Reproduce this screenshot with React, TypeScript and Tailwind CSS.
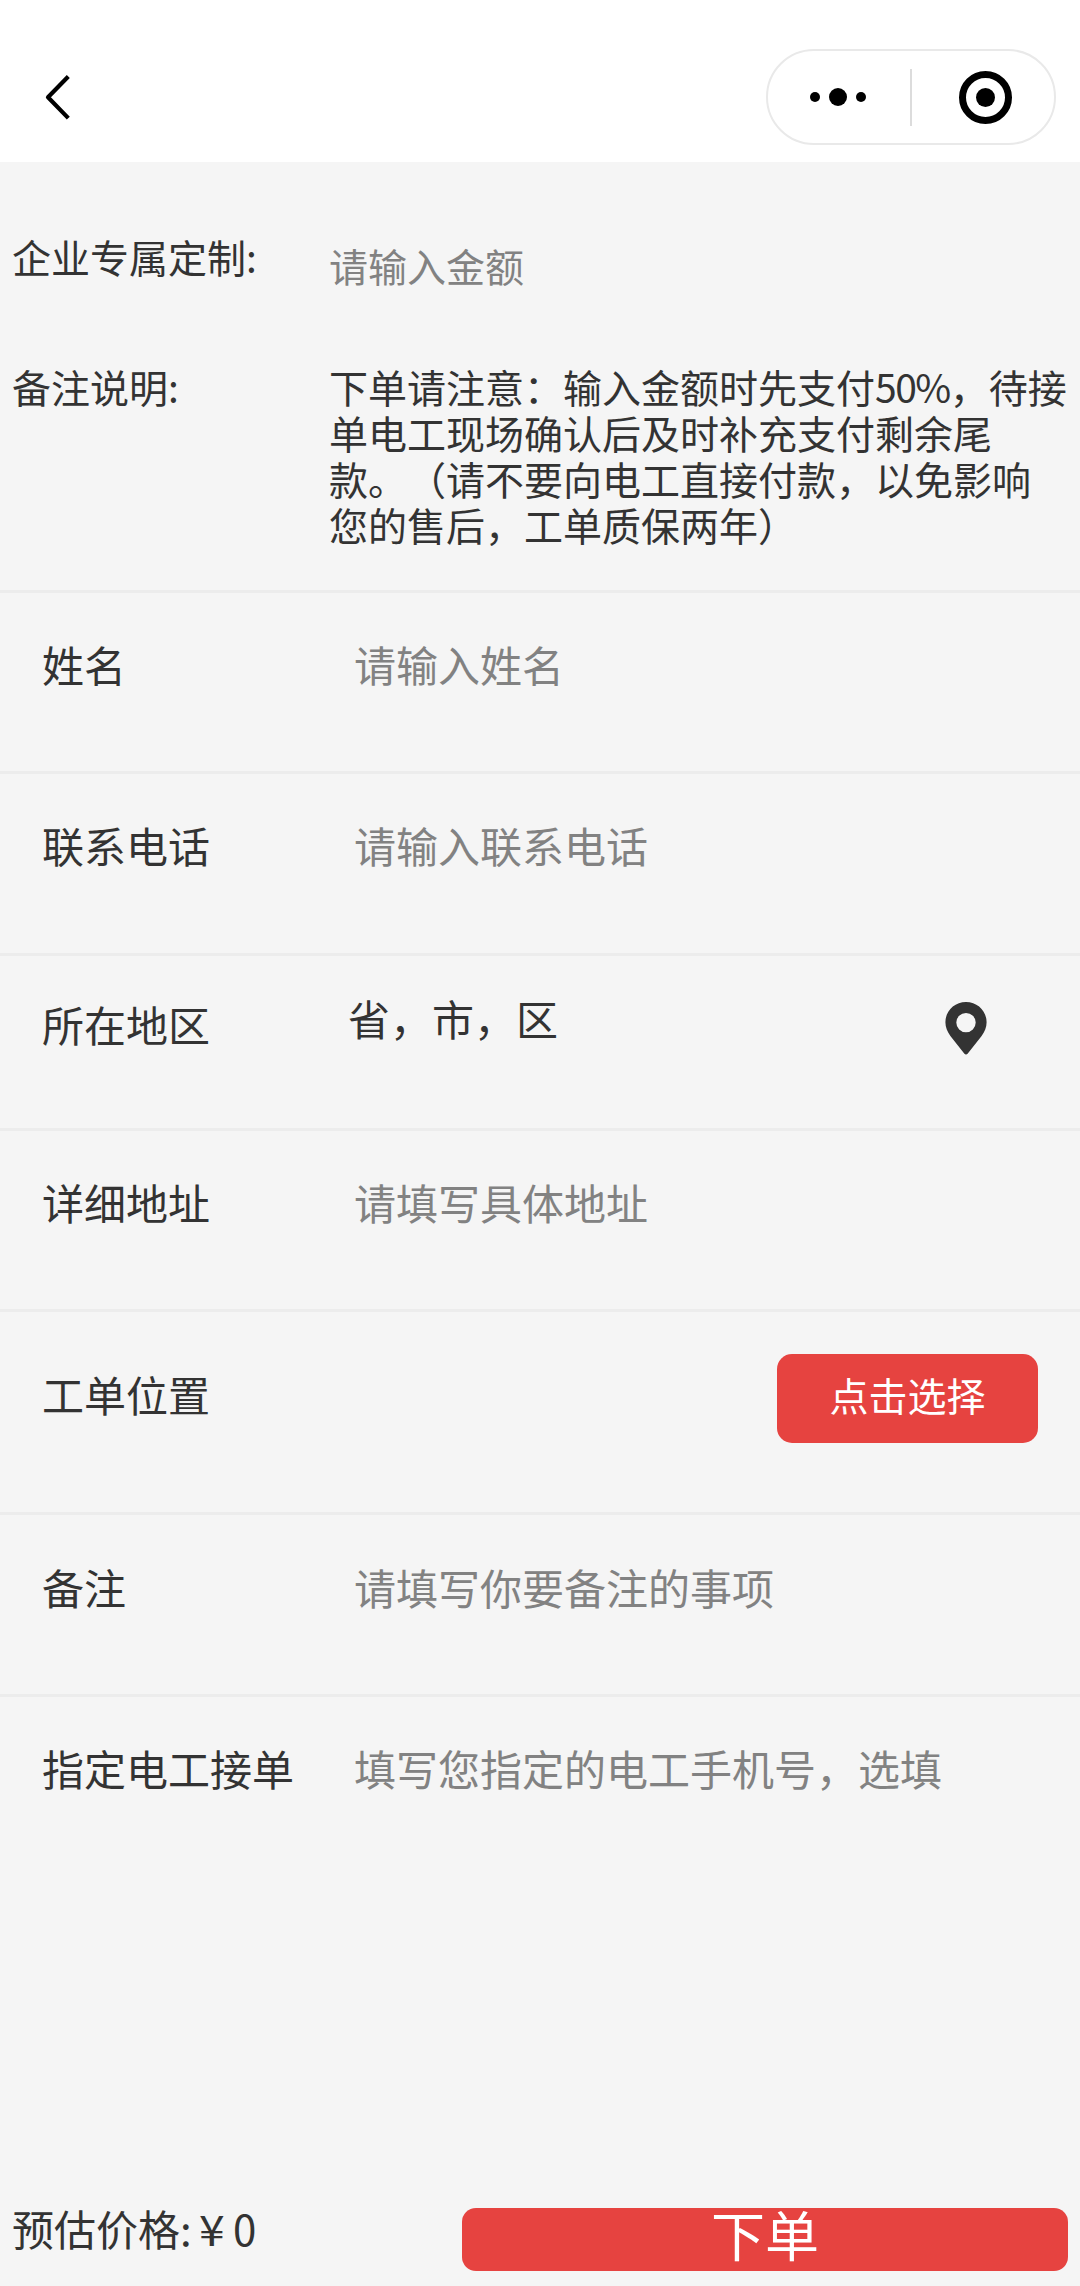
import type { ReactNode } from "react";

function Header() {
  return (
    <header className="flex h-[162px] items-start justify-between bg-white pl-[40px] pr-[24px] pt-[49px]">
      <button type="button" aria-label="返回" className="flex h-[96px] items-center">
        <svg width="36" height="52" viewBox="0 0 36 52" fill="none" className="block">
          <path d="M28.300 5.500 8 26.300 28.300 47.100" stroke="#000" strokeWidth="4.200" strokeLinejoin="round" />
        </svg>
      </button>
      <div className="flex h-[96px] w-[290px] items-center rounded-full border-2 border-[#e9e9e9]">
        <button type="button" aria-label="更多" className="flex w-[142px] items-center justify-center gap-[9px] pr-[2px]">
          <span className="size-[10px] rounded-full bg-black" />
          <span className="size-[18px] rounded-full bg-black" />
          <span className="size-[10px] rounded-full bg-black" />
        </button>
        <span className="h-[57px] w-[2px] bg-[#dcdcdc]" />
        <button type="button" aria-label="关闭" className="flex flex-1 items-center justify-center pl-[5px]">
          <span className="flex size-[53px] items-center justify-center rounded-full border-[7px] border-black">
            <span className="size-[19px] rounded-full bg-black" />
          </span>
        </button>
      </div>
    </header>
  );
}

function Row({ label, className, children }: { label: string; className: string; children?: ReactNode }) {
  return (
    <div className={`flex items-start border-t-[3px] border-[#ececec] pl-[42px] text-[42px] leading-[60px] ${className}`}>
      <div className="w-[312px] shrink-0">{label}</div>
      {children}
    </div>
  );
}

function Field({ placeholder }: { placeholder: string }) {
  return (
    <input
      type="text"
      placeholder={placeholder}
      className="h-[60px] min-w-0 flex-1 bg-transparent leading-[60px] outline-none placeholder:text-[#828282] placeholder:opacity-100"
    />
  );
}

export default function App() {
  return (
    <div className="flex h-[2286px] w-[1080px] flex-col overflow-hidden bg-[#f5f5f5] font-['Noto_Sans_CJK_SC',sans-serif] text-[#333] [text-spacing-trim:space-all]">
      <Header />

      <section className="flex h-[428px] flex-col text-[39px]">
        <div className="flex h-[180px] items-start pl-[12px] pt-[64px] leading-[60px]">
          <div className="w-[317px] shrink-0">企业专属定制:</div>
          <input
            type="text"
            placeholder="请输入金额"
            className="mt-[9px] h-[60px] min-w-0 flex-1 bg-transparent leading-[60px] outline-none placeholder:text-[#828282] placeholder:opacity-100"
          />
        </div>
        <div className="flex items-start pl-[12px] pt-[21px] leading-[46px]">
          <div className="w-[317px] shrink-0">备注说明:</div>
          <p className="whitespace-nowrap">
            下单请注意：输入金额时先支付<span className="tracking-[-1.5px]">50%</span>，待接
            <br />
            单电工现场确认后及时补充支付剩余尾
            <br />
            款。（请不要向电工直接付款，以免影响
            <br />
            您的售后，工单质保两年）
          </p>
        </div>
      </section>

      <Row label="姓名" className="h-[181px] pt-[41px]">
        <Field placeholder="请输入姓名" />
      </Row>
      <Row label="联系电话" className="h-[182px] pt-[41px]">
        <Field placeholder="请输入联系电话" />
      </Row>
      <Row label="所在地区" className="h-[175px] pt-[38px]">
        <div className="-ml-[6px] -mt-[6px] flex-1">省，市，区</div>
        <svg width="42" height="53" viewBox="0 0 42 53" className="mr-[93px] mt-[8px] shrink-0">
          <path
            fillRule="evenodd"
            fill="#333"
            d="M21 0C9.400 0 .4 9 .4 20.200c0 5.400 2 9.400 5 13.800L19.200 51.600c1 1.300 2.600 1.300 3.600 0L36.600 34c3-4.400 5-8.400 5-13.800C41.600 9 32.600 0 21 0Zm0 10.900a9.700 9.700 0 1 1 0 19.400a9.700 9.700 0 0 1 0-19.400Z"
          />
        </svg>
      </Row>
      <Row label="详细地址" className="h-[181px] pt-[41px]">
        <Field placeholder="请填写具体地址" />
      </Row>
      <Row label="工单位置" className="h-[203px] pt-[52px]">
        <button
          type="button"
          className="-mt-[10px] ml-auto mr-[42px] h-[89px] w-[261px] rounded-[15px] bg-[#e64340] pb-[8px] text-[39px] leading-[81px] text-white"
        >
          点击选择
        </button>
      </Row>
      <Row label="备注" className="h-[182px] pt-[42px]">
        <Field placeholder="请填写你要备注的事项" />
      </Row>
      <Row label="指定电工接单" className="pt-[41px]">
        <Field placeholder="填写您指定的电工手机号，选填" />
      </Row>

      <footer className="mt-auto flex h-[78px] items-start justify-between pl-[12px] pr-[12px]">
        <div className="-mt-[10px] text-[42px] leading-[60px]">
          预估价格:<span className="ml-[7px] inline-block origin-left scale-x-110">¥</span>
          <span className="ml-[11px]">0</span>
        </div>
        <button
          type="button"
          className="flex h-[63px] w-[606px] items-center justify-center rounded-[14px] bg-[#e64340] text-[54px] leading-[54px] text-white"
        >
          <span className="-mt-[11px]">下单</span>
        </button>
      </footer>
    </div>
  );
}
